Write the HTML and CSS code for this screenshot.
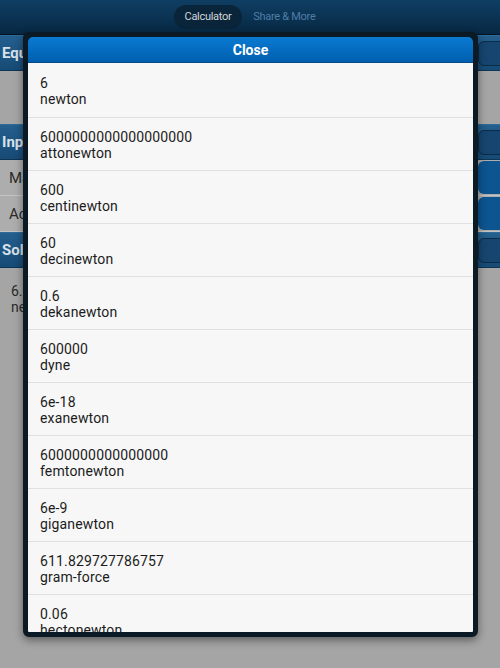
FILE: index.html
```html
<!DOCTYPE html>
<html lang="en">
<head>
    <meta charset="UTF-8">
    <meta name="viewport" content="width=device-width, initial-scale=1.0">
    <title>Force Converter</title>
    <link rel="stylesheet" href="styles.css">
</head>
<body>
    <div class="page">
        <header class="topbar">
            <nav class="tabs">
                <span class="tab active">Calculator</span>
                <span class="tab">Share &amp; More</span>
            </nav>
        </header>

        <div class="bar">
            <span class="bar-title">Equation</span>
            <span class="bar-btn"></span>
        </div>
        <div class="spacer"></div>

        <div class="bar">
            <span class="bar-title">Inputs</span>
            <span class="bar-btn"></span>
        </div>
        <div class="field">
            <span class="field-label">Mass</span>
            <span class="field-btn"></span>
        </div>
        <div class="field">
            <span class="field-label">Acceleration</span>
            <span class="field-btn"></span>
        </div>

        <div class="bar">
            <span class="bar-title">Solution</span>
            <span class="bar-btn"></span>
        </div>
        <div class="result">
            <div>6.0</div>
            <div>newton</div>
        </div>
    </div>

    <!-- popup with unit list -->
    <div class="popup">
        <div class="popup-head">Close</div>
        <ul class="units">
            <li><span>6</span><span>newton</span></li>
            <li><span>6000000000000000000</span><span>attonewton</span></li>
            <li><span>600</span><span>centinewton</span></li>
            <li><span>60</span><span>decinewton</span></li>
            <li><span>0.6</span><span>dekanewton</span></li>
            <li><span>600000</span><span>dyne</span></li>
            <li><span>6e-18</span><span>exanewton</span></li>
            <li><span>6000000000000000</span><span>femtonewton</span></li>
            <li><span>6e-9</span><span>giganewton</span></li>
            <li><span>611.829727786757</span><span>gram-force</span></li>
            <li><span>0.06</span><span>hectonewton</span></li>
        </ul>
    </div>
</body>
</html>
```

FILE: styles.css
```css
* {
    margin: 0;
    padding: 0;
    box-sizing: border-box;
    font-family: Roboto, "Liberation Sans", sans-serif;
}

body, html {
    height: 100%;
    width: 100%;
    background: #a5a5a5;
    overflow: hidden;
}

.page {
    height: 100vh;
    display: flex;
    flex-direction: column;
}

.topbar {
    height: 35px;
    background: linear-gradient(#0f3e63, #072843);
    display: flex;
    justify-content: center;
    align-items: center;
    border-bottom: 1px solid #031522;
}

.tabs {
    display: flex;
    align-items: center;
}

.tab {
    font-size: 11px;
    color: #4f7ea6;
    padding: 0 11px;
    height: 24px;
    line-height: 24px;
    border-radius: 12px;
    letter-spacing: -0.3px;
}

.tab.active {
    background: #0a2439;
    color: #d2d6da;
}

.bar {
    height: 36px;
    background: linear-gradient(#245f8e, #174b76);
    border-top: 1px solid #2f6b98;
    border-bottom: 1px solid #0d3555;
    display: flex;
    align-items: center;
    justify-content: space-between;
    padding-left: 2px;
}

.bar-title {
    color: #d9e1ea;
    font-weight: bold;
    font-size: 15px;
}

.bar-btn {
    width: 40px;
    height: 25px;
    margin-right: -18px;
    border: 1px solid #0b2c47;
    border-radius: 6px;
    background: #164570;
}

.spacer {
    height: 53px;
}

.field {
    height: 36px;
    background: #adadad;
    border-bottom: 1px solid #c4c4c4;
    display: flex;
    align-items: center;
    justify-content: space-between;
    padding-left: 9px;
}

.field-label {
    font-size: 15px;
    color: #2a2a2a;
}

.field-btn {
    width: 40px;
    height: 33px;
    margin-right: -18px;
    border-radius: 6px;
    background: #0c5591;
}

.result {
    padding: 15px 11px;
    font-size: 14px;
    color: #2a2a2a;
    line-height: 16px;
}

/* overlay popup */
.popup {
    position: absolute;
    top: 32px;
    left: 23px;
    width: 455px;
    height: 605px;
    background: #0b1a24;
    border: 5px solid #0b1a24;
    border-radius: 6px;
    box-shadow: 0 3px 8px rgba(0, 0, 0, 0.45);
    display: flex;
    flex-direction: column;
    overflow: hidden;
}

.popup-head {
    height: 26px;
    flex-shrink: 0;
    background: linear-gradient(#0a7ad2, #005fae);
    border-radius: 5px 5px 0 0;
    border-bottom: 1px solid #004a88;
    color: #fff;
    font-weight: bold;
    font-size: 14px;
    display: flex;
    justify-content: center;
    align-items: center;
}

.units {
    list-style: none;
    flex: 1;
    overflow: hidden;
    background: #f7f7f7;
}

.units li {
    height: 53px;
    padding: 11px 12px 9px;
    border-bottom: 1px solid #e0e0e0;
    display: flex;
    flex-direction: column;
    font-size: 14px;
    line-height: 16px;
    letter-spacing: 0.15px;
    color: #1c1c1c;
}

.units li:first-child {
    height: 55px;
    padding-top: 12px;
}
```
